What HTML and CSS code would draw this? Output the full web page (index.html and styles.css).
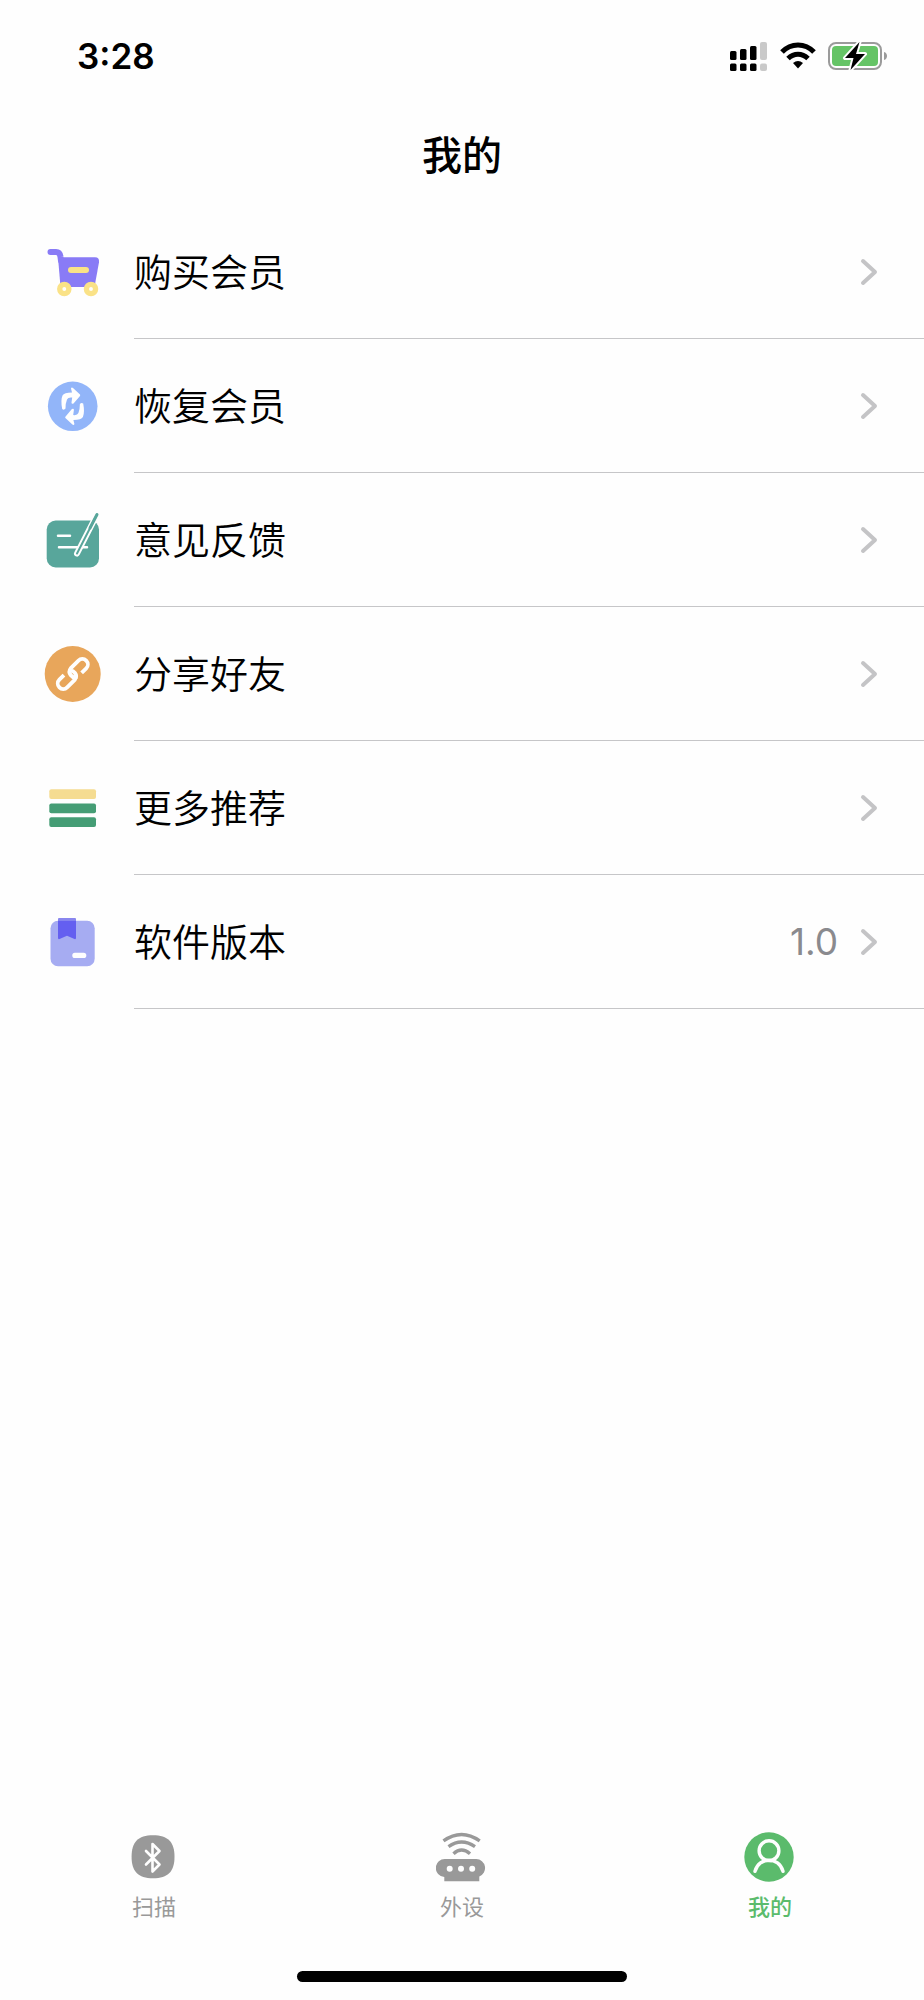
FILE: index.html
```html
<!DOCTYPE html>
<html lang="zh-CN">
<head>
<meta charset="utf-8">
<meta name="viewport" content="width=device-width, initial-scale=1">
<title>我的</title>
<link rel="stylesheet" href="styles.css">
</head>
<body>
<div class="status-bar">
  <time class="clock">3:28</time>
  <div class="status-icons">
    <svg width="38" height="30" viewBox="0 0 38 30" aria-hidden="true">
      <rect x="0" y="10" width="6.500" height="9" rx="1.500"/><rect x="10" y="8" width="6.500" height="11" rx="1.500"/><rect x="20" y="5" width="6.500" height="14" rx="1.500"/>
      <rect x="30" y="1" width="7" height="18" rx="2" fill="#c9c9c9"/>
      <rect x="0" y="22.500" width="6.500" height="7.500" rx="1.500"/><rect x="10" y="22.500" width="6.500" height="7.500" rx="1.500"/><rect x="20" y="22.500" width="6.500" height="7.500" rx="1.500"/>
      <rect x="30" y="22.500" width="7" height="7.500" rx="2" fill="#c9c9c9"/>
    </svg>
    <svg width="36" height="30" viewBox="0 0 36 30" aria-hidden="true">
      <g fill="none" stroke="#000" stroke-width="5"><path d="M2 11C11 1.500 25 1.500 34 11"/><path d="M8 17.500C14 11.800 22 11.800 28 17.500"/></g>
      <path d="M13 22Q18 18 23 22L18 27.500Z"/>
    </svg>
    <svg width="60" height="30" viewBox="0 0 60 30" aria-hidden="true">
      <rect x="1" y="2" width="52" height="26" rx="7" fill="none" stroke="#9b9b9b" stroke-width="2"/>
      <path d="M56 11c4 1 4 7 0 8z" fill="#9b9b9b"/>
      <rect x="4" y="5" width="46" height="20" rx="4" fill="#65c466"/>
      <path d="M31.500 1 17 17h8.500l-3 12L37 13h-9z" fill="#000" stroke="#fefefe" stroke-width="4" stroke-linejoin="round" paint-order="stroke"/>
    </svg>
  </div>
</div>

<header class="title-bar"><h1>我的</h1></header>

<main>
  <ul class="menu">
    <li><a class="row" href="#buy">
      <svg class="row-icon" viewBox="0 0 60 60" aria-hidden="true">
        <path d="M7.500 10H13q4 0 4.500 5l.5 4" fill="none" stroke="#897bf6" stroke-width="6" stroke-linecap="round"/>
        <path d="M15 15.300H52q4.500 0 4 5L51.500 45H17.500z" fill="#897bf6"/>
        <rect x="25" y="25" width="21" height="6" rx="3" fill="#fae287"/>
        <g fill="#fefefe" stroke="#fae287" stroke-width="5.300"><circle cx="21.300" cy="47" r="4.600"/><circle cx="48" cy="47" r="4.600"/></g>
      </svg>
      <span class="row-body"><span class="label">购买会员</span><svg class="chevron" viewBox="0 0 18 28" aria-hidden="true"><path d="M3 3 15 14 3 25"/></svg></span>
    </a></li>
    <li><a class="row" href="#restore">
      <svg class="row-icon" viewBox="0 0 60 60" aria-hidden="true">
        <circle cx="29.700" cy="30.300" r="24.800" fill="#92b5f9"/>
        <g fill="#fefefe"><path id="arrow" d="M19.200 33Q17.500 24 19.500 19.500Q21 16.500 29 16.500L28 12.500Q28.500 11 30 12L37 18.600Q37.600 19.400 36.800 20.200L30.500 27.500Q28.500 28.500 28.500 26.500L29.200 21.500Q25 21 24 23.500Q22.500 27 22.500 32.500Q21 34.500 19.200 33Z"/>
        <use href="#arrow" transform="rotate(180 29.700 30.300)"/></g>
      </svg>
      <span class="row-body"><span class="label">恢复会员</span><svg class="chevron" viewBox="0 0 18 28" aria-hidden="true"><path d="M3 3 15 14 3 25"/></svg></span>
    </a></li>
    <li><a class="row" href="#feedback">
      <svg class="row-icon" viewBox="0 0 60 60" aria-hidden="true">
        <rect x="3.700" y="10.500" width="52.300" height="47" rx="9" fill="#58a69b"/>
        <g fill="none" stroke-linecap="round">
          <path d="M15 25.700H27M16 37.300H44" stroke="#fefefe" stroke-width="2.500"/>
          <path d="M54 4.500 34 43.500" stroke="#fefefe" stroke-width="6"/>
          <path d="M54 4.500 47 18" stroke="#58a69b" stroke-width="3"/>
          <path d="M54 4.500 34 43.500" stroke="#58a69b" stroke-width="2"/>
        </g>
      </svg>
      <span class="row-body"><span class="label">意见反馈</span><svg class="chevron" viewBox="0 0 18 28" aria-hidden="true"><path d="M3 3 15 14 3 25"/></svg></span>
    </a></li>
    <li><a class="row" href="#share">
      <svg class="row-icon" viewBox="0 0 60 60" aria-hidden="true">
        <circle cx="29.700" cy="30" r="28" fill="#e8a65b"/>
        <g transform="translate(29.800 30) rotate(-45)" fill="none" stroke="#fefefe" stroke-width="3.800">
          <path d="M7 5.500H13.500A5.500 5.500 0 0 0 13.500-5.500H2.500A5.500 5.500 0 0 0 1 5"/>
          <path d="M-7-5.500H-13.500A5.500 5.500 0 0 0-13.500 5.500H-2.500A5.500 5.500 0 0 0-1-5"/>
        </g>
      </svg>
      <span class="row-body"><span class="label">分享好友</span><svg class="chevron" viewBox="0 0 18 28" aria-hidden="true"><path d="M3 3 15 14 3 25"/></svg></span>
    </a></li>
    <li><a class="row" href="#more">
      <svg class="row-icon" viewBox="0 0 60 60" aria-hidden="true">
        <rect x="6.300" y="11.300" width="46.700" height="9.700" rx="2" fill="#f5dc91"/>
        <rect x="6.300" y="25.600" width="46.700" height="9.600" rx="2" fill="#459d75"/>
        <rect x="6.300" y="39.200" width="46.700" height="9.800" rx="2" fill="#459d75"/>
      </svg>
      <span class="row-body"><span class="label">更多推荐</span><svg class="chevron" viewBox="0 0 18 28" aria-hidden="true"><path d="M3 3 15 14 3 25"/></svg></span>
    </a></li>
    <li><a class="row" href="#version">
      <svg class="row-icon" viewBox="0 0 60 60" aria-hidden="true">
        <path d="M15 9V7q0-1 1-1H32q1 0 1 1V9z" fill="#8986ee"/>
        <rect x="7.500" y="8.700" width="44.200" height="45.500" rx="7.500" fill="#a6acf2"/>
        <path d="M15 8.700H33V26q0 1.500-1.500 1L24 23.700 16.500 27Q15 27.500 15 26z" fill="#645ff0"/>
        <rect x="29.300" y="40.700" width="14" height="5.300" rx="2.600" fill="#fefefe"/>
      </svg>
      <span class="row-body"><span class="label">软件版本</span><span class="value">1.0</span><svg class="chevron" viewBox="0 0 18 28" aria-hidden="true"><path d="M3 3 15 14 3 25"/></svg></span>
    </a></li>
  </ul>
</main>

<footer class="bottom">
  <nav class="tabs">
    <a class="tab" href="#scan">
      <svg class="tab-icon" viewBox="0 0 52 52" aria-hidden="true">
        <path d="M25 4.300C40 4.300 46.500 11 46.500 25.800S40 47.300 25 47.300 3.600 40.500 3.600 25.800 10 4.300 25 4.300z" fill="#999"/>
        <path d="M18 20 31.500 33.500 24.500 40.500V13L31.500 20 18 33.500" fill="none" stroke="#fefefe" stroke-width="2.600" stroke-linecap="round" stroke-linejoin="round"/>
      </svg>
      <span>扫描</span>
    </a>
    <a class="tab" href="#devices">
      <svg class="tab-icon" viewBox="0 0 52 52" aria-hidden="true">
        <g fill="none" stroke="#999" stroke-width="3.400"><path d="M7.500 9.800Q25.500-3 43.700 9.800"/><path d="M12.500 15.700Q25.500 6.500 39 15.700"/><path d="M17.500 22.700Q25.500 15.500 34 22.700"/></g>
        <path d="M9.300 28H40.300a9 9 0 0 1 3 17.400V50.300H8.300V46A9 9 0 0 1 9.300 28z" fill="#999"/>
        <g fill="#fefefe"><circle cx="13.700" cy="37.700" r="3"/><circle cx="25" cy="37.700" r="3"/><circle cx="36.200" cy="37.700" r="3"/></g>
      </svg>
      <span>外设</span>
    </a>
    <a class="tab active" href="#me" aria-current="page">
      <svg class="tab-icon" viewBox="0 0 52 52" aria-hidden="true">
        <circle cx="25" cy="26" r="24.700" fill="#5bbb6c"/>
        <g fill="none" stroke="#fefefe" stroke-width="3.400" stroke-linecap="round"><circle cx="25" cy="19.700" r="9.900"/><path d="M11 40.300C15 25.500 35 25.500 39 40.300"/></g>
      </svg>
      <span>我的</span>
    </a>
  </nav>
  <div class="home-indicator"></div>
</footer>
</body>
</html>
```

FILE: styles.css
```css
* {
  box-sizing: border-box;
}

body {
  display: flex;
  flex-direction: column;
  min-height: 100vh;
  margin: 0;
  background: #fefefe;
  color: #000;
  font-family: Inter, "Noto Sans CJK SC", sans-serif;
}

a {
  color: inherit;
  text-decoration: none;
}

.status-bar {
  display: flex;
  align-items: center;
  justify-content: space-between;
  height: 111px;
  padding: 0 36px 0 77px;
}

.clock {
  font-size: 35px;
  font-weight: 600;
  line-height: 44px;
}

.status-icons {
  display: flex;
  align-items: center;
  gap: 12px;
}

.title-bar {
  height: 94px;
  text-align: center;
}

.title-bar h1 {
  margin: 0;
  font-family: "Noto Sans CJK SC", sans-serif;
  font-size: 40px;
  font-weight: 500;
  line-height: 84px;
}

.menu {
  margin: 0;
  padding: 0;
  list-style: none;
}

.row {
  display: flex;
  align-items: center;
  gap: 31px;
  padding-left: 43px;
}

.row-icon {
  flex: none;
  width: 60px;
  height: 60px;
}

.row-body {
  display: flex;
  flex: 1;
  align-items: center;
  height: 134px;
  padding-right: 46px;
  border-bottom: 1px solid #c6c6c8;
}

.label {
  flex: 1;
  padding-bottom: 4px;
  font-family: "Noto Sans CJK SC", sans-serif;
  font-size: 38px;
  font-weight: 350;
  line-height: 56px;
}

.value {
  margin-right: 22px;
  color: #8a8a8e;
  font-size: 37px;
  line-height: 56px;
}

.chevron {
  flex: none;
  width: 18px;
  height: 28px;
  fill: none;
  stroke: #c4c4c6;
  stroke-width: 4;
  stroke-linecap: round;
  stroke-linejoin: round;
}

.bottom {
  margin-top: auto;
  padding-bottom: 18px;
}

.tabs {
  display: grid;
  grid-template-columns: repeat(3, 1fr);
}

.tab {
  display: flex;
  flex-direction: column;
  align-items: center;
  gap: 6px;
  color: #999;
  font-family: "Noto Sans CJK SC", sans-serif;
  font-size: 22px;
  line-height: 32px;
}

.tab.active {
  color: #5bbb6c;
  font-weight: 500;
}

.tab-icon {
  width: 52px;
  height: 52px;
}

.home-indicator {
  width: 330px;
  max-width: 60%;
  height: 11px;
  margin: 50px auto 0;
  border-radius: 6px;
  background: #000;
}
```
